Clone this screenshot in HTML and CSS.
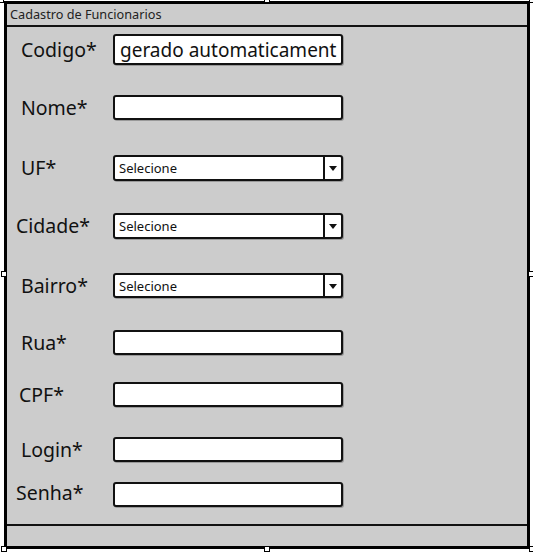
FILE: index.html
```html
<!DOCTYPE html>
<html lang="pt">
<head>
<meta charset="utf-8">
<title>Cadastro de Funcionarios</title>
<link rel="stylesheet" href="styles.css">
</head>
<body>
<div class="frame">
  <div class="window">
    <div class="titlebar">Cadastro de Funcionarios</div>
    <div class="content">
      <div class="row row-codigo">
        <label class="label">Codigo*</label>
        <div class="field field-tall"><span class="field-text">gerado automaticament</span></div>
      </div>
      <div class="row row-nome">
        <label class="label">Nome*</label>
        <div class="field"></div>
      </div>
      <div class="row row-uf">
        <label class="label">UF*</label>
        <div class="field select"><span class="select-text">Selecione</span><span class="select-btn"><span class="arrow"></span></span></div>
      </div>
      <div class="row row-cidade">
        <label class="label label-left">Cidade*</label>
        <div class="field select"><span class="select-text">Selecione</span><span class="select-btn"><span class="arrow"></span></span></div>
      </div>
      <div class="row row-bairro">
        <label class="label">Bairro*</label>
        <div class="field select"><span class="select-text">Selecione</span><span class="select-btn"><span class="arrow"></span></span></div>
      </div>
      <div class="row row-rua">
        <label class="label">Rua*</label>
        <div class="field"></div>
      </div>
      <div class="row row-cpf">
        <label class="label label-mid">CPF*</label>
        <div class="field"></div>
      </div>
      <div class="row row-login">
        <label class="label">Login*</label>
        <div class="field"></div>
      </div>
      <div class="row row-senha">
        <label class="label label-left">Senha*</label>
        <div class="field"></div>
      </div>
    </div>
    <div class="footer"></div>
  </div>
  <span class="handle h-tl"></span>
  <span class="handle h-tm"></span>
  <span class="handle h-tr"></span>
  <span class="handle h-ml"></span>
  <span class="handle h-mr"></span>
  <span class="handle h-bl"></span>
  <span class="handle h-bm"></span>
  <span class="handle h-br"></span>
</div>
</body>
</html>
```

FILE: styles.css
```css
* { box-sizing: border-box; }

html, body {
  margin: 0;
  padding: 0;
  background: #ffffff;
}

body {
  font-family: "Noto Sans", "DejaVu Sans", sans-serif;
  color: #111;
  width: 533px;
  height: 555px;
  overflow: hidden;
}

.frame {
  position: relative;
  margin: 1px 0 0 4px;
  width: 526px;
  height: 548px;
}

.window {
  width: 100%;
  height: 100%;
  border: 3px solid #000;
  background: #cccccc;
  display: flex;
  flex-direction: column;
}

.titlebar {
  height: 23px;
  flex: none;
  border-bottom: 2px solid #111;
  font-size: 12.7px;
  line-height: 21px;
  padding-left: 3px;
  color: #222;
}

.content {
  flex: 1;
  display: flex;
  flex-direction: column;
  padding-top: 7px;
}

.footer {
  flex: none;
  height: 22px;
  border-top: 2px solid #111;
}

.row {
  display: flex;
  align-items: center;
  height: 25px;
}

.row-codigo { height: 31px; }
.row-nome { margin-top: 30px; }
.row-uf { margin-top: 35px; height: 26px; }
.row-cidade { margin-top: 32px; height: 26px; }
.row-bairro { margin-top: 34px; }
.row-rua { margin-top: 32px; }
.row-cpf { margin-top: 27px; }
.row-login { margin-top: 30px; }
.row-senha { margin-top: 20px; }

.label {
  width: 106px;
  padding-left: 14px;
  font-size: 19.5px;
  line-height: 1;
  color: #111;
}

.label-left { padding-left: 9px; }
.label-mid { padding-left: 12px; }
.row-senha .label { position: relative; top: -2px; }

.field {
  width: 230px;
  height: 100%;
  background: #fff;
  border: 2px solid #111;
  border-radius: 3px;
  box-shadow: 1px 1px 0 rgba(0,0,0,0.25);
  display: flex;
  align-items: center;
  overflow: hidden;
}

.field-text {
  white-space: nowrap;
  font-size: 19px;
  padding-left: 5px;
  color: #111;
}

.select-text {
  flex: 1;
  font-size: 13px;
  padding-left: 4px;
  color: #111;
}

.select-btn {
  width: 18px;
  height: 100%;
  border-left: 2px solid #111;
  display: flex;
  align-items: center;
  justify-content: center;
}

.arrow {
  width: 0;
  height: 0;
  border-left: 4px solid transparent;
  border-right: 4px solid transparent;
  border-top: 5px solid #111;
  margin-top: 1px;
}

.handle {
  position: absolute;
  width: 6px;
  height: 6px;
  background: #fff;
  border: 1px solid #000;
}

.h-tl { left: -6px; top: -4px; }
.h-tm { left: 260px; top: -4px; }
.h-tr { left: 525px; top: -4px; }
.h-ml { left: -3px; top: 270px; }
.h-mr { left: 524px; top: 270px; }
.h-bl { left: -3px; top: 545px; }
.h-bm { left: 260px; top: 545px; }
.h-br { left: 525px; top: 545px; }
```
